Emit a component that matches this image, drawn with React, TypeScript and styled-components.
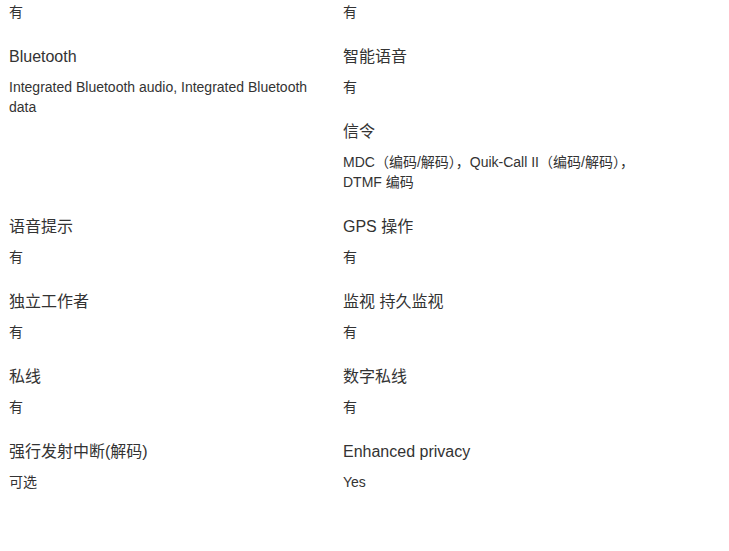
import styled, { createGlobalStyle } from 'styled-components';

const GlobalStyle = createGlobalStyle`
    html, body {
        margin: 0;
        background: #fff;
    }
    body {
        font-family: 'Liberation Sans', Arial, 'Noto Sans CJK SC', sans-serif;
        color: #333;
    }
`;

const SpecGrid = styled.div`
    display: grid;
    grid-template-columns: 334px 334px;
    padding: 2px 0 0 9px;
`;

const Cell = styled.div`
    padding-right: 20px;
`;

const Item = styled.div`
    margin-bottom: 24px;
`;

const Label = styled.div`
    font-size: 16px;
    line-height: 22px;
    margin-bottom: 9px;
`;

const Value = styled.div`
    font-size: 14px;
    line-height: 20px;
`;

interface ISpec {
    label?: string;
    value: string;
}

const rows: ISpec[][][] = [
    [[{ value: '有' }], [{ value: '有' }]],
    [
        [{ label: 'Bluetooth', value: 'Integrated Bluetooth audio, Integrated Bluetooth data' }],
        [
            { label: '智能语音', value: '有' },
            { label: '信令', value: 'MDC（编码/解码），Quik-Call II（编码/解码），DTMF 编码' },
        ],
    ],
    [[{ label: '语音提示', value: '有' }], [{ label: 'GPS 操作', value: '有' }]],
    [[{ label: '独立工作者', value: '有' }], [{ label: '监视 持久监视', value: '有' }]],
    [[{ label: '私线', value: '有' }], [{ label: '数字私线', value: '有' }]],
    [[{ label: '强行发射中断(解码)', value: '可选' }], [{ label: 'Enhanced privacy', value: 'Yes' }]],
];

const App = () => {
    return (
        <>
            <GlobalStyle />
            <SpecGrid>
                {rows.map((row, rowIdx) =>
                    row.map((cell, cellIdx) => (
                        <Cell key={`${rowIdx}-${cellIdx}`}>
                            {cell.map((spec, idx) => (
                                <Item key={idx}>
                                    {spec.label && <Label>{spec.label}</Label>}
                                    <Value>{spec.value}</Value>
                                </Item>
                            ))}
                        </Cell>
                    ))
                )}
            </SpecGrid>
        </>
    );
};

export default App;
